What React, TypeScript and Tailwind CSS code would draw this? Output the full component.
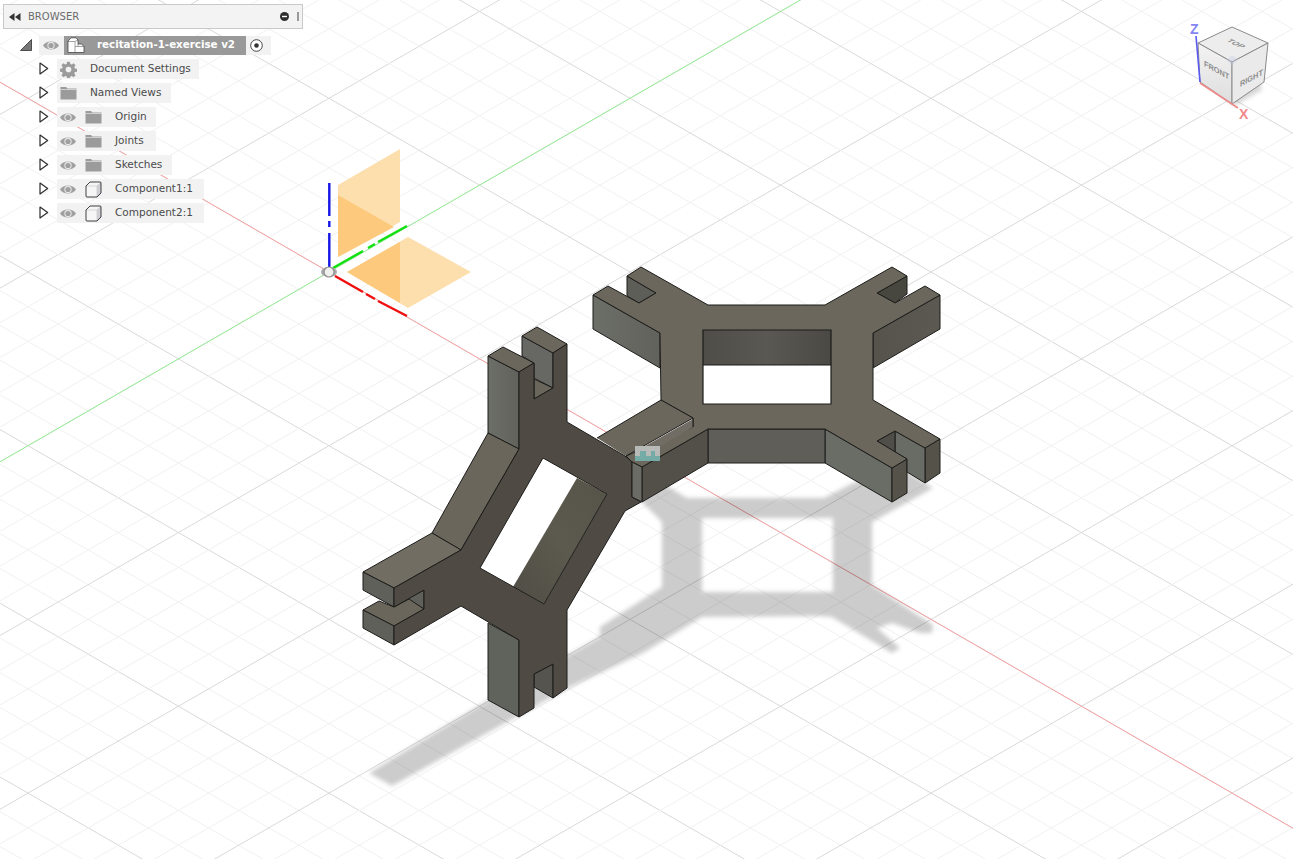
import React from "react";

const OX = 329;
const OY = 272;
const DX = 30.1;
const DY = 17.37;

// --- Construction grid, both directions, every 5th line is heavier ---
const gridLines = () => {
  const out: React.ReactNode[] = [];
  for (let i = -60; i <= 60; i++) {
    const major = i % 5 === 0;
    const cls = major ? "#d9d9d9" : "#f1f1f1";
    const cx = OX + i * DX;
    const cy1 = OY + i * DY;
    const cy2 = OY - i * DY;
    const L = 70;
    out.push(
      <line key={"a" + i} x1={cx - L * DX} y1={cy2 - L * DY} x2={cx + L * DX} y2={cy2 + L * DY} stroke={cls} strokeWidth={1} />
    );
    out.push(
      <line key={"b" + i} x1={cx - L * DX} y1={cy1 + L * DY} x2={cx + L * DX} y2={cy1 - L * DY} stroke={cls} strokeWidth={1} />
    );
  }
  return out;
};

const Face = ({ p, f }: { p: string; f: string }) => (
  <polygon points={p} fill={f} stroke="#1c1c1a" strokeWidth={1} strokeLinejoin="round" />
);

const Scene = () => (
  <svg className="absolute inset-0" width={1293} height={859} viewBox="0 0 1293 859">
    <defs>
      <filter id="soft" x="-10%" y="-10%" width="120%" height="120%">
        <feGaussianBlur stdDeviation="2" />
      </filter>
      <linearGradient id="sideL" x1="0" y1="0" x2="1" y2="0">
        <stop offset="0" stopColor="#6c6e68" />
        <stop offset="1" stopColor="#62625c" />
      </linearGradient>
      <linearGradient id="sideR" x1="0" y1="0" x2="1" y2="0">
        <stop offset="0" stopColor="#55534b" />
        <stop offset="1" stopColor="#5b5951" />
      </linearGradient>
      <linearGradient id="win" x1="0" y1="0" x2="1" y2="0">
        <stop offset="0" stopColor="#4e4d48" />
        <stop offset="0.5" stopColor="#5a5853" />
        <stop offset="1" stopColor="#4a4944" />
      </linearGradient>
      <linearGradient id="win2" x1="0" y1="1" x2="1" y2="0">
        <stop offset="0" stopColor="#504d45" />
        <stop offset="0.5" stopColor="#5c594e" />
        <stop offset="1" stopColor="#565349" />
      </linearGradient>
      <linearGradient id="cubeShade" x1="0" y1="0" x2="0" y2="1">
        <stop offset="0" stopColor="#f3f3f3" />
        <stop offset="1" stopColor="#dedede" />
      </linearGradient>
    </defs>

    {gridLines()}

    {/* world axes */}
    <line x1={OX - 400} y1={OY - 400 * 0.577} x2={OX + 1000} y2={OY + 1000 * 0.577} stroke="#f7a3a3" strokeWidth={1} />
    <line x1={OX - 400} y1={OY + 400 * 0.577} x2={OX + 1000} y2={OY - 1000 * 0.577} stroke="#98f098" strokeWidth={1} />

    {/* shadow on the ground */}
    <path
      filter="url(#soft)"
      fill="#000"
      fillOpacity={0.2}
      fillRule="evenodd"
      d="M369 773 L392 786 L568 688 L643 653 L702 617 L820 616 L832 617 L892 653 L900 648 L877 628 L892 623 L920 633 L932 633 L933 625 L872 585 L872 522 L933 488 L905 470 L853 483 L824 498 L687 498 L640 470 L600 490 L642 502 L662 522 L662 587 L600 627 L600 637 L490 699 Z M702 518 L833 518 L833 592 L702 592 Z"
    />

    {/* origin planes */}
    <polygon points="338,185 400,149 400,222 338,257" fill="#fddfae" />
    <polygon points="347,272 408,237 471,272 408,308" fill="#fddfae" />
    <polygon points="338,195 394,227 338,257" fill="#fdc97c" />
    <polygon points="347,272 400,242 400,303" fill="#fdc97c" />

    {/* origin triad */}
    <g strokeWidth={2.4}>
      <path d="M329.3 183 V216 M329.3 221 V227 M329.3 233 V267" stroke="#1414e6" />
      <path d="M333 268 L363 251 M368 248 L375 244 M378 242 L407 226" stroke="#10e010" />
      <path d="M335 276 L363 292 M366 294 L375 299 M378 301 L407 316" stroke="#f01010" />
    </g>
    <ellipse cx={329} cy={272} rx={8} ry={5} fill="#a9a9a9" />
    <circle cx={329} cy={272} r={5} fill="#f0f0ec" stroke="#8f8f8f" strokeWidth={1.2} />

    {/* Component2, the flat X */}
    <Face p="593,295 660,333 660,368 593,329" f="url(#sideL)" />
    <Face p="873,333 940,295 940,329 873,368" f="url(#sideR)" />
    <Face p="627,276 656,293 639,303 627,296" f="#5d5e58" />
    <Face p="877,293 907,276 907,294 895,303" f="#47463f" />
    <Face p="825,429 892,468 892,502 825,463" f="#6a6c66" />
    <Face p="708,429 825,429 825,463 708,463" f="#5f5e58" />
    <Face p="708,429 708,463 642,502 642,467" f="#53504a" />
    <Face p="892,468 907,459 907,493 892,502" f="#55524a" />
    <Face p="925,448 940,439 940,473 925,483" f="#55524a" />
    <Face p="895,431 925,448 925,483 907,472 907,459 895,452" f="#696b65" />
    <Face p="877,441 895,431 895,452" f="#4f4e48" />
    <Face
      p="593,295 608,286 639,303 656,293 627,276 641,267 708,305 825,305 892,267 907,276 877,293 895,303 925,286 940,295 873,333 873,400 940,439 925,448 895,431 877,441 907,459 892,468 825,429 708,429 642,467 632,462 626,456 693,427 693,418 661,400 660,333"
      f="#6b675d"
    />
    <polygon points="597,438 661,400 693,418 626,456" fill="#6b675d" />
    <polygon points="693,419 693,427 652,451 640,449" fill="#716d64" />
    <polyline points="597,438 661,400 693,418 626,456" fill="none" stroke="#1c1c1a" />
    <line x1={693} y1={418} x2={693} y2={427} stroke="#1c1c1a" />
    <polygon points="703,330 831,330 831,404 703,404" fill="#fff" />
    <polygon points="703,330 831,330 831,365 703,365" fill="url(#win)" />
    <path d="M703 330 H831 V404 H703 Z M703 365 H831" fill="none" stroke="#1c1c1a" strokeWidth={1.2} />

    {/* Component1, standing part */}
    <Face p="488,356 519,372 519,449 488,433" f="url(#sideL)" />
    <Face p="488,356 503,347 534,363 519,372" f="#6b675d" />
    <Face p="522,336 553,353 553,388 534,378 534,363 522,356" f="#676864" />
    <Face p="522,336 537,327 567,344 553,353" f="#6b675d" />
    <Face p="534,379 553,388 534,399" f="#6a665c" />
    <Face p="488,433 519,449 461,550 432,533" f="#6a665c" />
    <Face p="432,533 461,550 394,588 363,572" f="#716d62" />
    <Face p="363,572 394,588 394,607 363,590" f="#5f605a" />
    <Face p="406,599 424,590 424,609" f="#5f605a" />
    <Face p="363,610 379,601 394,607 409,599 424,609 394,626" f="#6a665c" />
    <Face p="363,610 394,626 394,645 363,628" f="#5f605a" />
    <Face p="488,623 519,640 519,717 488,700" f="#60625c" />
    <Face p="534,674 553,664 553,698 534,687" f="#55544e" />
    <Face
      p="519,372 534,363 534,399 553,388 553,353 567,344 567,422 625,456 632,462 632,497 641,502 625,511 567,610 567,688 553,698 553,664 534,674 534,708 519,717 519,640 461,606 394,645 394,626 424,609 424,590 394,607 394,588 461,550 519,449"
      f="#4f4b44"
    />
    <Face p="632,462 642,467 642,502 632,497" f="#6b6c66" />
    <polygon points="543,458 607,494 544,604 480,568" fill="#fff" />
    <polygon points="577,478 607,494 544,604 513,587" fill="url(#win2)" />
    <path d="M543 458 L607 494 L544 604 L480 568 Z" fill="none" stroke="#1c1c1a" strokeWidth={1} />

    {/* joint glyph */}
    <rect x={635} y={446} width={25} height={15} fill="#b8bab7" />
    <path d="M635 456 H640 V451 H646 V456 H651 V451 H655 V456 H660 V461 H635 Z" fill="#74aba7" />

    {/* view cube */}
    <polygon points="1210,86 1234,106 1262,90 1258,78" fill="#000" fillOpacity={0.16} filter="url(#soft)" />
    <polygon points="1198,43 1232,27 1268,43 1232,62" fill="#ededed" stroke="#8a8a8a" />
    <polygon points="1198,43 1232,62 1232,104 1200,82" fill="url(#cubeShade)" stroke="#8a8a8a" />
    <polygon points="1232,62 1268,43 1264,82 1232,104" fill="#eaeaea" stroke="#8a8a8a" />
    <polygon points="1232,55 1238,59 1232,66 1226,60" fill="#c8c8e8" fillOpacity={0.35} />
    <g fontFamily="'Liberation Sans', sans-serif" fontWeight="700" fill="#8d8d8d">
      <text fontSize={8} transform="matrix(0.95 0.45 -0.85 0.42 1226 41)">TOP</text>
      <text fontSize={8} transform="matrix(0.92 0.5 0 1 1204 66)">FRONT</text>
      <text fontSize={8} transform="matrix(0.92 -0.5 0 1 1240 87)">RIGHT</text>
    </g>
    <line x1={1196} y1={36} x2={1200} y2={82} stroke="#5a5af0" strokeWidth={1.6} />
    <line x1={1200} y1={83} x2={1238} y2={108} stroke="#ee8a8a" strokeWidth={1.6} />
    <text x={1190} y={34} fontSize={14} fontWeight="700" fontFamily="'Liberation Sans', sans-serif" fill="#8585f5">Z</text>
    <text x={1239} y={119} fontSize={14} fontWeight="700" fontFamily="'Liberation Sans', sans-serif" fill="#f08a8a">X</text>
  </svg>
);

// --- Browser tree icons ---
const Eye = () => (
  <svg width={16} height={11} viewBox="0 0 16 11" className="shrink-0">
    <path d="M0 5.5 C3 .2 13 .2 16 5.5 C13 10.8 3 10.8 0 5.5 Z" fill="#a0a0a0" />
    <circle cx={8} cy={5.5} r={3.7} fill="#e4e4e4" />
    <circle cx={8} cy={5.5} r={2.6} fill="#a0a0a0" />
  </svg>
);

const Folder = () => (
  <svg width={17} height={14} viewBox="0 0 17 14" className="shrink-0">
    <path d="M0.5 1 H6 L7.5 2.5 H16.5 V13.5 H0.5 Z" fill="#9b9b9b" />
    <path d="M0.5 3.5 H16.5" stroke="#e6e6e6" strokeWidth={0.7} />
  </svg>
);

const Gear = () => (
  <svg width={17} height={17} viewBox="0 0 24 24" className="shrink-0">
    <path
      fill="#9b9b9b"
      fillRule="evenodd"
      d="M10 1h4l.6 3.1 2 .8 2.6-1.8 2.8 2.8-1.8 2.6.8 2 3 .5v4l-3 .6-.8 2 1.8 2.6-2.8 2.8-2.6-1.8-2 .8-.6 3h-4l-.6-3-2-.8-2.6 1.8-2.8-2.8 1.8-2.6-.8-2-3-.6v-4l3-.5.8-2L2 5.9l2.8-2.8 2.6 1.8 2-.8zM12 8a4 4 0 1 0 0 8 4 4 0 0 0 0-8z"
    />
  </svg>
);

const Cube = () => (
  <svg width={17} height={17} viewBox="0 0 17 17" className="shrink-0">
    <path d="M1 5 L5 1 H15 Q16 1 16 2 V12 L12 16 H2 Q1 16 1 15 Z" fill="#f6f6f6" />
    <path d="M12 5 L16 1 V12 L12 16 Z" fill="#d0d0d6" />
    <path d="M1 5 H12 V16 M12 5 L16 1" fill="none" stroke="#c4c4c4" strokeWidth={0.6} />
    <path d="M1 5 L5 1 H15 Q16 1 16 2 V12 L12 16 H2 Q1 16 1 15 Z" fill="none" stroke="#2a2a2a" strokeWidth={0.9} strokeLinejoin="round" />
  </svg>
);

const RootIcon = () => (
  <svg width={18} height={16} viewBox="0 0 18 16" className="shrink-0">
    <path d="M1 15.5 V4 L4 .8 H9 L11 3 V7 H14.5 L17 9.5 V15.5 Z" fill="#fff" />
    <path d="M1 4.5 H8 V15.5 M8 4.5 L11 3 M11 7 V9.5 H17 M8 9.5 H11" fill="none" stroke="#8d8d8d" strokeWidth={0.8} />
    <path d="M1 15.5 V4 L4 .8 H9 L11 3 V7 H14.5 L17 9.5 V15.5 Z" fill="none" stroke="#333" strokeWidth={0.7} />
  </svg>
);

const Twisty = () => (
  <svg width={10} height={13} viewBox="0 0 10 13" className="shrink-0 -mt-px">
    <path d="M1 1 L8.7 6.5 L1 12 Z" fill="#fff" stroke="#2e2e2e" strokeWidth={1.2} strokeLinejoin="round" />
  </svg>
);

type RowProps = {
  label: string;
  icon: React.ReactNode;
  eye?: boolean;
  width: number;
};

const Row = ({ label, icon, eye, width }: RowProps) => (
  <div className="flex items-center h-6 pl-[39px]">
    <Twisty />
    <div
      className="flex items-center h-5 bg-[#f2f2f2] ml-2 pl-[3px]"
      style={{ width }}
    >
      {eye && (
        <div className="w-[25px] shrink-0">
          <Eye />
        </div>
      )}
      <div className="w-[30px] shrink-0 flex">{icon}</div>
      <span className="text-[10.5px] text-[#4b4b4b] whitespace-nowrap">{label}</span>
    </div>
  </div>
);

const BrowserPanel = () => (
  <div className="relative w-[304px] pt-1 pl-[3px] font-['DejaVu_Sans',sans-serif]">
    <div className="flex items-center h-[25px] w-[300px] bg-[#f3f3f3] border border-[#c9c9c9] pl-[5px] pr-[3px]">
      <svg width={12} height={8} viewBox="0 0 12 8" className="shrink-0">
        <path d="M5.5 0 V8 L0 4 Z M11.5 0 V8 L6 4 Z" fill="#333" />
      </svg>
      <span className="ml-[7px] text-[10px] text-[#6b6b6b] flex-1">BROWSER</span>
      <svg width={9} height={9} viewBox="0 0 9 9" className="shrink-0">
        <circle cx={4.5} cy={4.5} r={4.5} fill="#2f2f2f" />
        <rect x={2} y={3.8} width={5} height={1.4} fill="#fff" />
      </svg>
      <div className="ml-[8px] w-[2px] h-[9px] border-l border-r border-[#9a9a9a] shrink-0" />
    </div>

    <div className="flex items-center h-5 mt-[6px] ml-[17px]">
      <svg width={12} height={12} viewBox="0 0 12 12" className="shrink-0">
        <path d="M0.5 11.5 L11.5 0.5 V11.5 Z" fill="#777" stroke="#2e2e2e" strokeWidth={0.8} />
      </svg>
      <div className="flex items-center h-[19px] w-[232px] bg-[#f2f2f2] ml-[7px] pl-[4px]">
        <Eye />
        <div className="flex items-center h-full w-[182px] bg-[#999999] ml-[5px] pl-[3px]">
          <RootIcon />
          <span className="ml-[12px] text-[10.3px] font-bold text-white whitespace-nowrap">
            recitation-1-exercise v2
          </span>
        </div>
        <svg width={13} height={13} viewBox="0 0 13 13" className="ml-[4px] shrink-0">
          <circle cx={6.5} cy={6.5} r={5.8} fill="#fff" stroke="#333" strokeWidth={0.9} />
          <circle cx={6.5} cy={6.5} r={2.3} fill="#333" />
        </svg>
      </div>
    </div>

    <div className="mt-[2px] -ml-[3px]">
      <Row label="Document Settings" icon={<Gear />} width={142} />
      <Row label="Named Views" icon={<Folder />} width={114} />
      <Row label="Origin" icon={<Folder />} eye width={99} />
      <Row label="Joints" icon={<Folder />} eye width={99} />
      <Row label="Sketches" icon={<Folder />} eye width={115} />
      <Row label="Component1:1" icon={<Cube />} eye width={147} />
      <Row label="Component2:1" icon={<Cube />} eye width={147} />
    </div>
  </div>
);

export default function App() {
  return (
    <div className="relative w-[1293px] h-[859px] overflow-hidden bg-white">
      <Scene />
      <BrowserPanel />
    </div>
  );
}
